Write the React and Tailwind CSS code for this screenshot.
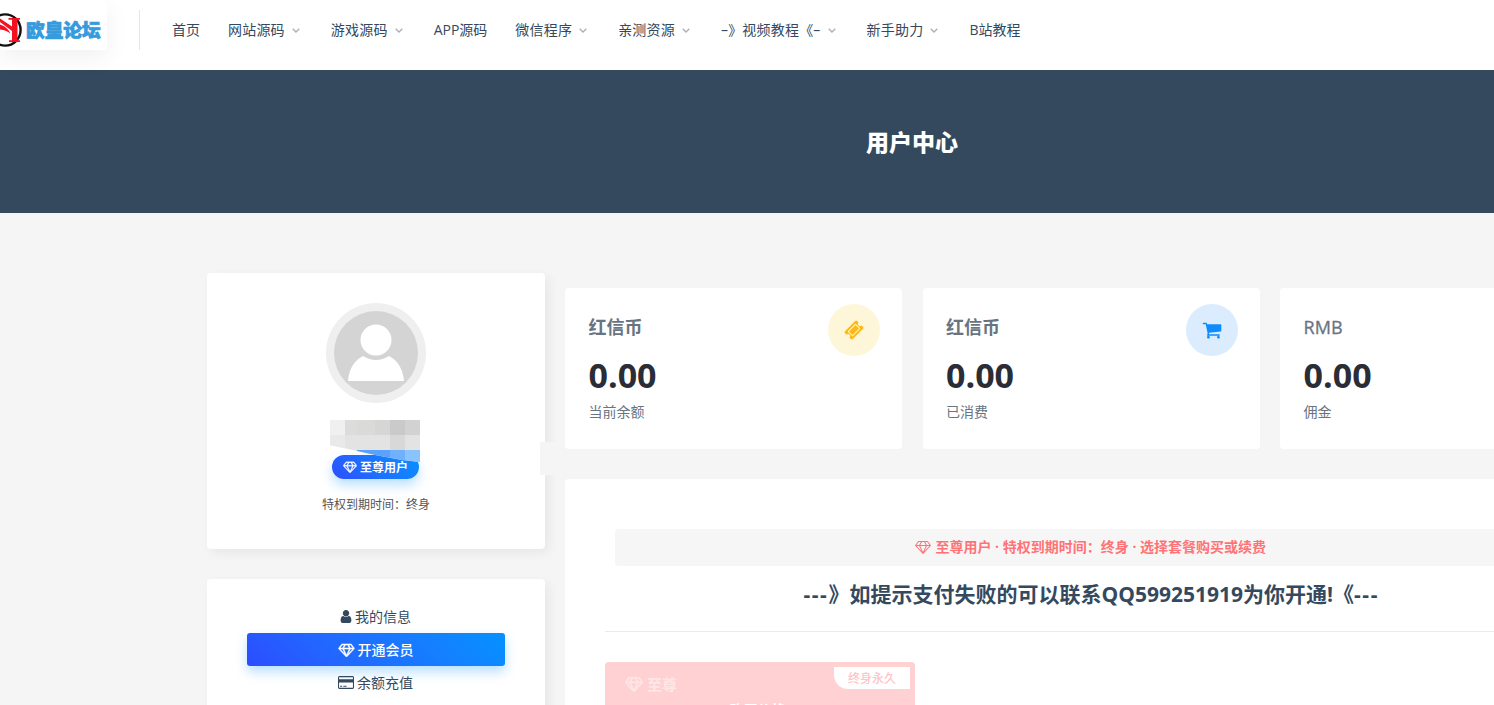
const ICONS = {
  diamond: {
    box: '0 0 2048 1792',
    d: 'M212 768l623 665-300-665H212zm812 772l349-772H675zM538 640l204-384H480L192 640h346zm675 793l623-665h-323zM683 640h682l-204-384H887zm827 0h346l-288-384h-262zm141-486l384 512q14 18 13 41.5t-17 40.5l-960 1024q-18 20-47 20t-47-20L17 748Q1 731 0 707.5T13 666l384-512q18-26 51-26h1152q33 0 51 26z',
  },
  user: {
    box: '256 0 1280 1792',
    d: 'M1536 1399q0 109-62.5 187t-150.5 78h-854q-88 0-150.5-78t-62.5-187q0-85 8.5-160.5t31.5-152 58.5-131 94-89 134.5-34.5q131 128 313 128t313-128q76 0 134.5 34.5t94 89 58.5 131 31.5 152 8.5 160.5zm-256-887q0 159-112.5 271.5t-271.5 112.5-271.5-112.5-112.5-271.5 112.5-271.5 271.5-112.5 271.5 112.5 112.5 271.5z',
  },
  card: {
    box: '0 0 1920 1792',
    d: 'M1760 128q66 0 113 47t47 113v1216q0 66-47 113t-113 47H160q-66 0-113-47T0 1504V288q0-66 47-113t113-47h1600zM160 256q-13 0-22.5 9.5T128 288v224h1664V288q0-13-9.5-22.5T1760 256H160zm1600 1280q13 0 22.5-9.5t9.5-22.5V896H128v608q0 13 9.5 22.5t22.5 9.5h1600zM256 1408v-128h256v128H256zm384 0v-128h384v128H640z',
  },
  ticket: {
    box: '0 0 1792 1792',
    d: 'M1024 452l316 316-572 572-316-316zm-211 979l618-618q19-19 19-45t-19-45l-362-362q-18-18-45-18t-45 18l-618 618q-19 19-19 45t19 45l362 362q18 18 45 18t45-18zm889-637l-907 908q-37 37-90.5 37t-90.5-37l-126-126q56-56 56-136t-56-136-136-56-136 56l-125-126q-37-37-37-90.5t37-90.5l907-906q37-37 90.5-37t90.5 37l125 125q-56 56-56 136t56 136 136 56 136-56l126 125q37 37 37 90.5t-37 90.5z',
  },
  cart: {
    box: '0 0 1792 1792',
    d: 'M704 1536q0 52-38 90t-90 38-90-38-38-90 38-90 90-38 90 38 38 90zm896 0q0 52-38 90t-90 38-90-38-38-90 38-90 90-38 90 38 38 90zm128-1088v512q0 24-16.5 42.5t-40.5 21.5l-1044 122q13 60 13 70 0 16-24 64h920q26 0 45 19t19 45-19 45-45 19h-1024q-26 0-45-19t-19-45q0-11 8-31.5t16-36 21.5-40 15.5-29.5l-177-823h-204q-26 0-45-19t-19-45 19-45 45-19h256q16 0 28.5 6.5t19.5 15.5 13 24.5 8 26 5.5 29.5 4.5 26h1201q26 0 45 19t19 45z',
  },
}

function Icon({ name, className }) {
  const icon = ICONS[name]
  return (
    <svg viewBox={icon.box} fill="currentColor" className={className}>
      <path d={icon.d} />
    </svg>
  )
}

const NAV = [
  { label: '首页' },
  { label: '网站源码', menu: true },
  { label: '游戏源码', menu: true },
  { label: 'APP源码' },
  { label: '微信程序', menu: true },
  { label: '亲测资源', menu: true },
  { label: '–》视频教程《–', menu: true },
  { label: '新手助力', menu: true },
  { label: 'B站教程' },
]

const STATS = [
  { title: '红信币', value: '0.00', note: '当前余额', icon: 'ticket', tone: 'bg-[#fdf6d8] text-[#ffb818]', weight: 'font-bold' },
  { title: '红信币', value: '0.00', note: '已消费',   icon: 'cart',   tone: 'bg-[#daecfd] text-[#0d8bff]', weight: 'font-bold' },
  { title: 'RMB',    value: '0.00', note: '佣金',     weight: 'font-medium [-webkit-text-stroke:0.3px_#68747f]' },
]

function Logo() {
  return (
    <div className="flex h-[50px] w-[107px] shrink-0 items-center rounded-[4px] bg-white pt-[10px] shadow-[0_8px_24px_rgba(0,0,0,0.06)]">
      <svg width="24" height="36" viewBox="0 0 24 36" className="shrink-0">
        <circle cx="5" cy="18" r="15.6" fill="#fff" stroke="#111" strokeWidth="2.4" />
        <path d="M8.500 6H20v1.800h-2.500v20.400H20V30H9v-1.800h3V19L0 10V6.500l12 8V7.800H8.500z" fill="#f5101f" />
        <path d="M0 12.500Q8 15 10.500 22Q7 18 0 17.500z" fill="#f5101f" />
      </svg>
      <span className="ml-[2px] whitespace-nowrap text-[18.700px] font-black leading-none text-[#359bdd] [-webkit-text-stroke:0.7px_#359bdd]">
        欧皇论坛
      </span>
    </div>
  )
}

function Header() {
  return (
    <header className="flex h-[70px] bg-white">
      <Logo />
      <div className="ml-8 mt-[10px] h-10 w-px shrink-0 bg-[#e4e6e8]" />
      <nav className="ml-8 flex h-[60px] items-center gap-[28px] text-sm text-[#34495e]">
        {NAV.map(item => (
          <a
            key={item.label}
            className={`flex items-center whitespace-nowrap ${item.menu ? 'tracking-[0.2px]' : ''}`}
          >
            {item.label}
            {item.menu && (
              <svg width="8" height="5" viewBox="0 0 8 5" className="ml-[7px] mr-[3px]" fill="none" stroke="#a9b0b6" strokeWidth="1.3">
                <path d="M0.700 0.700L4 4L7.300 0.700" />
              </svg>
            )}
          </a>
        ))}
      </nav>
    </header>
  )
}

function Avatar() {
  return (
    <svg width="100" height="100" viewBox="0 0 100 100">
      <circle cx="50" cy="50" r="50" fill="#efefef" />
      <circle cx="50" cy="50" r="42" fill="#d4d4d4" />
      <path d="M22 78C23 65 29 57 37 53q13 8 26 0c8 4 14 12 15 25z" fill="#fff" />
      <circle cx="50" cy="38" r="17" fill="#d4d4d4" />
      <circle cx="50" cy="37" r="15.500" fill="#fff" />
    </svg>
  )
}

// pixelated patch that hides the user name
function NameMask() {
  return (
    <svg width="90" height="42" viewBox="0 0 90 42" className="absolute left-[-2px] top-[-35px]" shapeRendering="crispEdges">
      <clipPath id="mask">
        <path d="M0 0H90V42L72 40L45 35L0 25z" />
      </clipPath>
      <g clipPath="url(#mask)">
        <path d="M0 0h90v42H0z" fill="#e3e3e4" />
        <path d="M0 0h15v15H0z" fill="#f0f0f0" />
        <path d="M0 15h15v15H0z" fill="#e9e9ea" />
        <path d="M15 0h12v15H15z" fill="#dcdcdc" />
        <path d="M27 0h18v15H27z" fill="#dadad9" />
        <path d="M45 0h15v15H45z" fill="#d6d6d6" />
        <path d="M60 0h15v15H60z" fill="#cacaca" />
        <path d="M75 0h15v15H75z" fill="#d2d2d2" />
        <path d="M60 15h15v15H60z" fill="#d8d8d8" />
        <path d="M27 30h33v12H27z" fill="#5ba2ff" />
        <path d="M60 30h15v12H60z" fill="#70b1ff" />
        <path d="M75 30h15v12H75z" fill="#8ac4ff" />
      </g>
    </svg>
  )
}

function ProfileCard() {
  return (
    <section className="relative flex h-[276px] flex-col items-center rounded-[4px] bg-white pt-[30px] shadow-[4px_4px_12px_rgba(0,0,0,0.06)]">
      <Avatar />
      <div className="relative mr-px mt-[52px] flex h-6 w-[87px] items-center justify-center rounded-full bg-linear-45 from-[#2c4dff] to-[#0491ff] text-xs font-bold text-white shadow-[0_6px_12px_rgba(0,145,255,0.28)]">
        <Icon name="diamond" className="mr-[3px] h-3 w-[14px] stroke-current stroke-[50]" />
        <span className="whitespace-nowrap pt-px">至尊用户</span>
        <NameMask />
      </div>
      <p className="mt-[17px] text-xs leading-[18px] text-[#555]">特权到期时间：终身</p>
      <div className="absolute -right-5 top-[169px] h-[33px] w-[25px] bg-[#f5f5f5]" />
    </section>
  )
}

function SideMenu() {
  return (
    <section className="mt-[30px] h-[240px] rounded-[4px] bg-white px-10 pt-[21px] text-sm text-[#34495e] shadow-[4px_4px_12px_rgba(0,0,0,0.06)]">
      <a className="flex h-[33px] items-center justify-center pr-px">
        <Icon name="user" className="mr-[3px] h-[15px] w-[12px]" />
        我的信息
      </a>
      <a className="flex h-[33px] items-center justify-center rounded-[3px] bg-linear-45 from-[#2c4dff] to-[#0491ff] pr-px font-medium text-white shadow-[0_6px_12px_rgba(0,145,255,0.28)]">
        <Icon name="diamond" className="mr-[3px] h-[14px] w-[17px] stroke-current stroke-[70]" />
        开通会员
      </a>
      <a className="flex h-[33px] items-center justify-center pr-px">
        <Icon name="card" className="mr-[3px] h-[15px] w-4" />
        余额充值
      </a>
    </section>
  )
}

function StatCard({ stat }) {
  return (
    <div className="flex h-[161px] w-[337.400px] shrink-0 justify-between rounded-[4px] bg-white pl-[23.500px] pr-[22.400px]">
      <div className="pt-[26px]">
        <h3 className={`text-lg leading-[26px] text-[#68747f] ${stat.weight}`}>{stat.title}</h3>
        <div className="mt-[15px] text-[34px] font-bold leading-10 text-[#2b2d36]">{stat.value}</div>
        <p className="mt-[7px] text-sm leading-5 text-[#68747f]">{stat.note}</p>
      </div>
      {stat.icon && (
        <div className={`mt-4 flex size-[52px] items-center justify-center rounded-full ${stat.tone}`}>
          <Icon name={stat.icon} className="size-5" />
        </div>
      )}
    </div>
  )
}

function VipPanel() {
  return (
    <section className="mt-[30px] h-[400px] rounded-[4px] bg-white px-10 pt-[50px]">
      <div className="mx-[10px] flex h-[37px] items-center justify-center rounded-[4px] bg-[#f6f6f6] pb-[2px] pr-px text-sm font-bold text-[#ff7377]">
        <Icon name="diamond" className="mr-1 h-[14px] w-4" />
        至尊用户 · 特权到期时间：终身 · 选择套餐购买或续费
      </div>
      <h2 className="mt-3 text-center text-[21px] font-bold leading-8 text-[#34495e]">
        <span className="tracking-[1.6px]">---</span>
        》如提示支付失败的可以联系QQ599251919为你开通!《
        <span className="tracking-[1.6px]">---</span>
      </h2>
      <hr className="mt-[21px] border-[#ebebeb]" />
      <div className="mt-[30px] h-[200px] w-[310px] rounded-[4px] bg-[#ffd1d3] pr-[5px] pt-[5px] text-[#ffe6e7]">
        <div className="flex items-start justify-between">
          <div className="ml-5 mt-[7px] flex items-center text-[15px] font-bold leading-5">
            <Icon name="diamond" className="mr-1 h-[16px] w-[18px] stroke-current stroke-[70]" />
            至尊
          </div>
          <span className="h-[22px] w-[76px] rounded-bl-[14px] bg-white text-center text-xs font-medium leading-[24px] text-[#ffc4c8]">
            终身永久
          </span>
        </div>
        <div className="mt-[6px] text-center text-sm font-bold leading-5 text-white">购买价格</div>
      </div>
    </section>
  )
}

export default function App() {
  return (
    <div className="h-[705px] w-full overflow-hidden bg-[#f5f5f5] font-['Open_Sans','Noto_Sans_CJK_SC',sans-serif]">
      <div className="w-[1824px]">
        <Header />
        <div className="flex h-[143px] items-center justify-center bg-[#34495e]">
          <h1 className="text-[23px] font-black leading-8 text-white">用户中心</h1>
        </div>
        <main className="mx-auto flex w-[1410px] gap-5 pt-[60px]">
          <aside className="w-[338px] shrink-0">
            <ProfileCard />
            <SideMenu />
          </aside>
          <div className="w-[1052.500px] shrink-0 pt-[15px]">
            <div className="flex justify-between">
              {STATS.map((stat, i) => <StatCard key={i} stat={stat} />)}
            </div>
            <VipPanel />
          </div>
        </main>
      </div>
    </div>
  )
}
